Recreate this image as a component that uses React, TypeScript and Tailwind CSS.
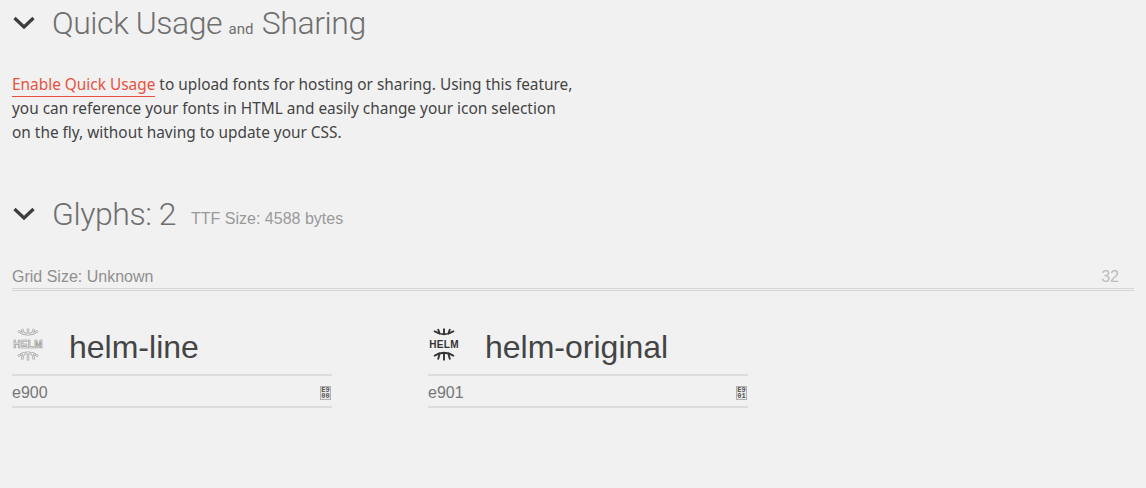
import React from 'react';

function Chevron() {
  return (
    <svg width="24" height="16" viewBox="0 0 24 16" className="shrink-0" fill="none" stroke="#3c3c3c" strokeWidth="3.2">
      <path d="M2.5 3 L12 12 L21.5 3" />
    </svg>
  );
}

const HELM_PATH =
  'M6 5 Q16 11.5 26 5 M16 2.5 V9 M10 3 L12 8.5 M22 3 L20 8.5 M6 30 Q16 23.5 26 30 M16 34.5 V26 M10 33.5 L12 26.5 M22 33.5 L20 26.5';

function HelmIcon({ outline }: { outline?: boolean }) {
  return (
    <svg width="32" height="38" viewBox="0 0 32 38" fill="none" className="mt-[-4px]">
      {outline ? (
        <>
          <path d={HELM_PATH} stroke="#a3a3a3" strokeWidth="2.4" />
          <path d={HELM_PATH} stroke="#f1f1f1" strokeWidth="0.9" />
        </>
      ) : (
        <path d={HELM_PATH} stroke="#333333" strokeWidth="1.9" />
      )}
      <text
        x="16"
        y="21.5"
        textAnchor="middle"
        fontFamily="'Liberation Sans', sans-serif"
        fontSize="10"
        fontWeight="700"
        letterSpacing="0.3"
        fill={outline ? '#f1f1f1' : '#333333'}
        stroke={outline ? '#8e8e8e' : 'none'}
        strokeWidth={outline ? 0.6 : 0}
      >
        HELM
      </text>
    </svg>
  );
}

function CodeBadge({ top, bottom }: { top: string; bottom: string }) {
  return (
    <div className="flex h-[14px] w-[11px] flex-col items-center justify-center border border-[#b0b0b0] bg-[#e8e8e8] font-['Liberation_Mono',monospace] text-[7px] leading-[6px] font-bold text-[#555]">
      <span>{top}</span>
      <span>{bottom}</span>
    </div>
  );
}

function GlyphCard({ name, code, outline }: { name: string; code: string; outline?: boolean }) {
  return (
    <div className="w-[320px]">
      <div className="flex h-[55px] items-center border-b-2 border-[#dcdcdc] pb-[2px]">
        <div className="flex w-[57px] justify-start">
          <HelmIcon outline={outline} />
        </div>
        <span className="text-[32px] text-[#444444]">{name}</span>
      </div>
      <div className="flex h-[32px] items-center justify-between border-b-2 border-[#dcdcdc] pt-[4px] pr-[1px]">
        <span className="text-base text-[#777777]">{code}</span>
        <CodeBadge top={code.slice(0, 2).toUpperCase()} bottom={code.slice(2)} />
      </div>
    </div>
  );
}

export default function App() {
  return (
    <div className="h-[488px] overflow-hidden bg-[#f1f1f1] px-3 font-['Liberation_Sans',sans-serif]">
      <div className="flex h-[46px] items-center gap-[16px]">
        <Chevron />
        <h2 className="font-['Roboto',sans-serif] text-[32px] font-light tracking-[-0.45px] text-[#6f6f6f]">
          Quick Usage <span className="mr-[1px] ml-[-1px] text-[15px] font-normal tracking-normal">and</span> Sharing
        </h2>
      </div>

      <p className="mt-[27px] w-[570px] font-['Noto_Sans',sans-serif] text-[15.4px] leading-6 text-[#444444]">
        <a className="border-b border-[#e8503f] pb-[1px] text-[#e8503f]">Enable Quick Usage</a> to upload fonts for hosting or sharing. Using this feature,
        <br />
        you can reference your fonts in HTML and easily change your icon selection
        <br />
        on the fly, without having to update your CSS.
      </p>

      <div className="mt-[46px] flex h-[46px] items-center gap-[15px]">
        <Chevron />
        <h2 className="ml-[1px] font-['Roboto',sans-serif] text-[32px] font-light tracking-[-0.45px] text-[#6f6f6f]">Glyphs: 2</h2>
        <span className="mt-[10px] text-base text-[#999999]">TTF Size: 4588 bytes</span>
      </div>

      <div className="mt-[28px] flex h-[26px] items-start justify-between border-b-[3px] border-double border-[#d6d6d6] pr-[15px] text-base text-[#8f8f8f]">
        <span>Grid Size: Unknown</span>
        <span className="text-[#bdbdbd]">32</span>
      </div>

      <div className="mt-[30px] flex gap-[96px]">
        <GlyphCard name="helm-line" code="e900" outline />
        <GlyphCard name="helm-original" code="e901" />
      </div>
    </div>
  );
}
